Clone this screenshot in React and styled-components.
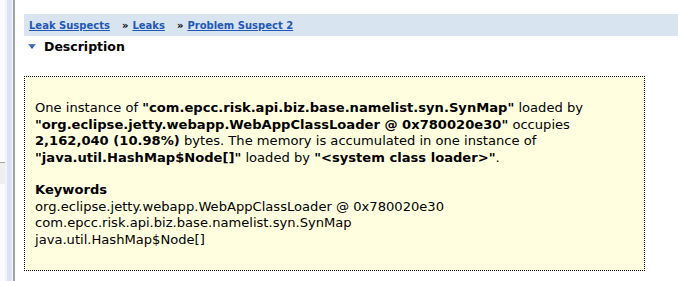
import styled, { createGlobalStyle } from 'styled-components'

const GlobalStyle = createGlobalStyle`
  html, body {
    margin: 0;
    padding: 0;
    background: #ffffff;
  }
  body {
    font-family: "DejaVu Sans", Verdana, sans-serif;
    color: #000;
  }
`

const Page = styled.div`
  display: flex;
  width: 678px;
  height: 281px;
  overflow: hidden;
`

const Rail = styled.div`
  display: flex;
  flex: none;
  height: 100%;
`

const RailStrip = styled.div`
  width: ${({ w }) => w}px;
  background: ${({ color }) => color};
`

const RailPanel = styled.div`
  width: 5px;
  display: flex;
  flex-direction: column;

  .top {
    height: 162px;
    background: #fbfbfb;
    border-bottom: 1px solid #a4a4a4;
  }
  .mid {
    height: 21px;
    background: #efefef;
  }
  .rest {
    flex: 1;
    background: #fbfbfb;
  }
`

const Main = styled.div`
  flex: 1;
  padding: 14px 0 0 8px;
  min-width: 0;
`

const Breadcrumb = styled.div`
  display: flex;
  align-items: center;
  height: 22px;
  padding-left: 5px;
  background: #d8e4f0;
  font-size: 10px;
  font-weight: bold;
  white-space: nowrap;
`

const Crumb = styled.a`
  color: #1f56b8;
  text-decoration: underline;
`

const Sep = styled.span`
  margin: 0 4px 0 12px;
  color: #000;
  font-size: 10px;
`

const SectionTitle = styled.div`
  display: flex;
  align-items: center;
  gap: 8px;
  height: 20px;
  padding-left: 4px;
  font-size: 12.5px;
  font-weight: bold;
`

const Box = styled.div`
  margin: 20px 33px 0 0;
  padding: 23px 10px 22px 10px;
  background: #ffffe0;
  border: 1px dotted #000;
  font-size: 13.1px;
  line-height: 16.5px;
`

const Para = styled.p`
  margin: 0 0 ${({ gap }) => gap || 0}px 0;
`

const Heading = styled.div`
  font-weight: bold;
`

function Triangle() {
  return (
    <svg width="8" height="5" viewBox="0 0 8 5">
      <defs>
        <linearGradient id="tri" x1="0" y1="0" x2="0" y2="1">
          <stop offset="0" stopColor="#5a86c8" />
          <stop offset="1" stopColor="#1d3f86" />
        </linearGradient>
      </defs>
      <polygon points="0,0 8,0 4,5" fill="url(#tri)" />
    </svg>
  )
}

export default function App() {
  return (
    <>
      <GlobalStyle />
      <Page>
        <Rail>
          <RailPanel>
            <div className="top" />
            <div className="mid" />
            <div className="rest" />
          </RailPanel>
          <RailStrip w={2} color="#f1f3f9" />
          <RailStrip w={5} color="#dce3f4" />
          <RailStrip w={1} color="#f6f6f6" />
          <RailStrip w={2} color="#a2a2a2" />
          <RailStrip w={1} color="#ffffff" />
        </Rail>
        <Main>
          <Breadcrumb>
            <Crumb>Leak Suspects</Crumb>
            <Sep>»</Sep>
            <Crumb>Leaks</Crumb>
            <Sep>»</Sep>
            <Crumb>Problem Suspect 2</Crumb>
          </Breadcrumb>
          <SectionTitle>
            <Triangle />
            <span>Description</span>
          </SectionTitle>
          <Box>
            <Para gap={16}>
              One instance of <b>"com.epcc.risk.api.biz.base.namelist.syn.SynMap"</b> loaded by
              <br />
              <b>"org.eclipse.jetty.webapp.WebAppClassLoader @ 0x780020e30"</b> occupies
              <br />
              <b>2,162,040 (10.98%)</b> bytes. The memory is accumulated in one instance of
              <br />
              <b>"java.util.HashMap$Node[]"</b> loaded by <b>"&lt;system class loader&gt;"</b>.
            </Para>
            <Heading>Keywords</Heading>
            <div>org.eclipse.jetty.webapp.WebAppClassLoader @ 0x780020e30</div>
            <div>com.epcc.risk.api.biz.base.namelist.syn.SynMap</div>
            <div>java.util.HashMap$Node[]</div>
          </Box>
        </Main>
      </Page>
    </>
  )
}
